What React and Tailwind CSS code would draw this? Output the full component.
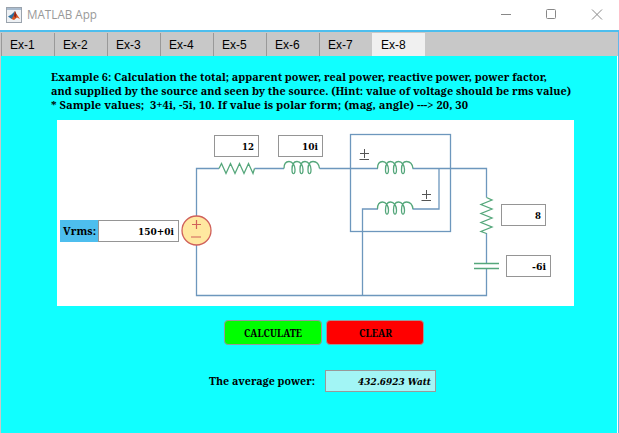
import React from 'react';

const tabs = ['Ex-1', 'Ex-2', 'Ex-3', 'Ex-4', 'Ex-5', 'Ex-6', 'Ex-7', 'Ex-8'];

function Logo() {
  return (
    <svg width="16" height="16" viewBox="0 0 16 16" className="-mt-px ml-1.5">
      <rect x="0.5" y="0.5" width="15" height="15" fill="#eef1f4" stroke="#9aa3ad" />
      <rect x="1" y="1" width="14" height="2" fill="#a9bccf" />
      <path d="M2 9.5 5.500 7.500 9 4 8 10 5.500 12Z" fill="#2b6f9f" />
      <path d="M5.500 12 7.500 9 9 4 10.500 7 14 12 11 10.500 8 13Z" fill="#d9541e" />
      <path d="M9 4 10.500 8 9.500 11 8 9Z" fill="#8c2519" />
    </svg>
  );
}

function TitleBar() {
  return (
    <header className="flex h-[30px] shrink-0 items-center bg-white text-[#999]">
      <Logo />
      <svg width="72" height="16" className="ml-[5px] block overflow-visible font-['Open_Sans',sans-serif] text-[12.5px]">
        <text x="0" y="12" textLength="70" lengthAdjust="spacingAndGlyphs" fill="#999">MATLAB App</text>
      </svg>
      <svg width="102" height="12" viewBox="0 0 102 12" className="mr-[16px] ml-auto" fill="none" stroke="#888">
        <path d="M0 5.500h10" />
        <rect x="45.500" y="0.500" width="9" height="9" rx="1" />
        <path d="m91 0.500 10 10m0-10-10 10" />
      </svg>
    </header>
  );
}

function Line({ width, size = 11, style = 'normal', children }) {
  return (
    <svg width={width} height="14" className="block shrink-0 overflow-visible">
      <text
        x="0"
        y="11"
        textLength={width}
        lengthAdjust="spacingAndGlyphs"
        fontSize={size}
        fontStyle={style}
        fontWeight="700"
        xmlSpace="preserve"
        fill="#000"
      >
        {children}
      </text>
    </svg>
  );
}

function Field({ className, width, children }) {
  return (
    <div
      className={
        "absolute flex h-[22px] items-center justify-end border border-[#959595] bg-white pr-1 font-['DejaVu_Serif',serif] " +
        className
      }
    >
      <Line width={width} size={9.5}>{children}</Line>
    </div>
  );
}

const coil =
  'c0-5 2.500-7 5-7c3.500 0 6 4 6 8c0 5.500-3 5.500-3 0c0-5 2-8 5-8c3.500 0 6 4 6 8c0 5.500-3 5.500-3 0c0-5 2-8 5-8c3.500 0 6 4 6 8c0 5.500-3 5.500-3 0c0-5 2-8 5-8c3.500 0 6 3 6.500 7';

function Circuit() {
  return (
    <svg width="517" height="186" viewBox="57 120 517 186" className="block" fill="none">
      <g stroke="#6d97bd" strokeWidth="1.3">
        <path d="M196.500 216v-47.500H219M254.500 168.500H284M319.500 168.500H378M412.500 168.500H486.500V197.500M486.500 233V263M486.500 269V295.500H196.500V245" />
        <rect x="350.500" y="134.500" width="100" height="97" />
        <path d="M362.500 295.500V209H378M412.500 209H439V168.500" />
      </g>
      <g stroke="#55a77b" strokeWidth="1.3">
        <path d="M219 168.500l2.500-5 4.500 10 4.500-10 4.500 10 4.500-10 4.500 10 4.500-10 4.500 10 1.500-5" />
        <path d="M486.500 197.500l5.500 2.500-11 4.500 11 4.500-11 4.500 11 4.500-11 4.500 11 4.500-11 4.500 5.500 2" />
        <path d="M474 263.500h25M474 268.500h25" />
        <path d={'M284 168.500' + coil} />
        <path d={'M377.500 168.500' + coil} />
        <path d={'M377.500 209' + coil} />
      </g>
      <circle cx="196.500" cy="230.500" r="14.500" fill="#ffe8a0" stroke="#d0605a" strokeWidth="1.3" />
      <path d="M192 224.500h9M196.500 220v9M191 237h10" stroke="#d0605a" strokeWidth="1.2" />
      <path d="M360 153.500h9M364.500 149v9M359.500 159.500h9.500M422 194.500h9M426.500 190v9M421.500 200.500h9.500" stroke="#555" />
    </svg>
  );
}

export default function App() {
  return (
    <div className="flex h-[433px] w-[619px] flex-col overflow-hidden bg-white font-['Droid_Serif','Noto_Serif','DejaVu_Serif',serif]">
      <TitleBar />
      <div className="h-0.5 shrink-0 bg-[#4dbeee]" />
      <main className="flex min-h-0 grow flex-col border-r border-l border-r-[#61b7ec] border-l-[#c8c8c8]">
        <nav className="flex h-6 shrink-0 bg-[#c8c8c8] pt-px font-['Liberation_Sans',Arial,sans-serif] text-[12px] text-black">
          {tabs.map((tab) => (
            <div
              key={tab}
              className={
                'flex w-[53px] items-center border-l pl-2 ' +
                (tab === 'Ex-8' ? 'border-[#f0f0f0] bg-[#f0f0f0]' : 'border-[#999]')
              }
            >
              {tab}
            </div>
          ))}
        </nav>
        <section className="mr-px grow bg-[#10ffff] pt-[14px]">
          <div className="ml-[50px] flex h-[50px] flex-col">
            <Line width={496}>Example 6: Calculation the total; apparent power, real power, reactive power, power factor,</Line>
            <Line width={520}>and supplied by the source and seen by the source. (Hint: value of voltage should be rms value)</Line>
            <Line width={417}>{'* Sample values;\u00a0 3+4i, -5i, 10. If value is polar form; (mag, angle) ---> 20, 30'}</Line>
          </div>
          <div className="relative ml-14 h-[186px] w-[517px] bg-white">
            <Circuit />
            <Field width={12} className="top-[15px] left-[157px] w-[45px]">12</Field>
            <Field width={16} className="top-[15px] left-[221px] w-[45px]">10i</Field>
            <div className="absolute top-[100px] left-[3px] flex h-[22px] w-[38px] items-center bg-[#4dbeee] pl-[3px]">
              <Line width={33}>Vrms:</Line>
            </div>
            <Field width={36} className="top-[100px] left-[41px] w-[81px]">150+0i</Field>
            <Field width={6} className="top-[84px] left-[444px] w-[45px]">8</Field>
            <Field width={14} className="top-[135px] left-[449px] w-[45px]">-6i</Field>
          </div>
          <div className="mt-[14px] ml-[223px] flex gap-1">
            <button className="flex h-[25px] w-[98px] items-center justify-center rounded border border-[#999] bg-[#00ff00]">
              <Line width={58} size={10}>CALCULATE</Line>
            </button>
            <button className="flex h-[25px] w-[98px] items-center justify-center rounded border border-[#999] bg-[#ff0000]">
              <Line width={33} size={10}>CLEAR</Line>
            </button>
          </div>
          <div className="mt-[25px] ml-[208px] flex items-center">
            <Line width={106}>The average power:</Line>
            <div className="ml-[10px] flex h-[22px] w-[111px] items-center justify-end border border-[#999] bg-[#a2f5f5] pr-1 font-['DejaVu_Serif',serif]">
              <Line width={73} size={10} style="italic">432.6923 Watt</Line>
            </div>
          </div>
        </section>
      </main>
    </div>
  );
}
